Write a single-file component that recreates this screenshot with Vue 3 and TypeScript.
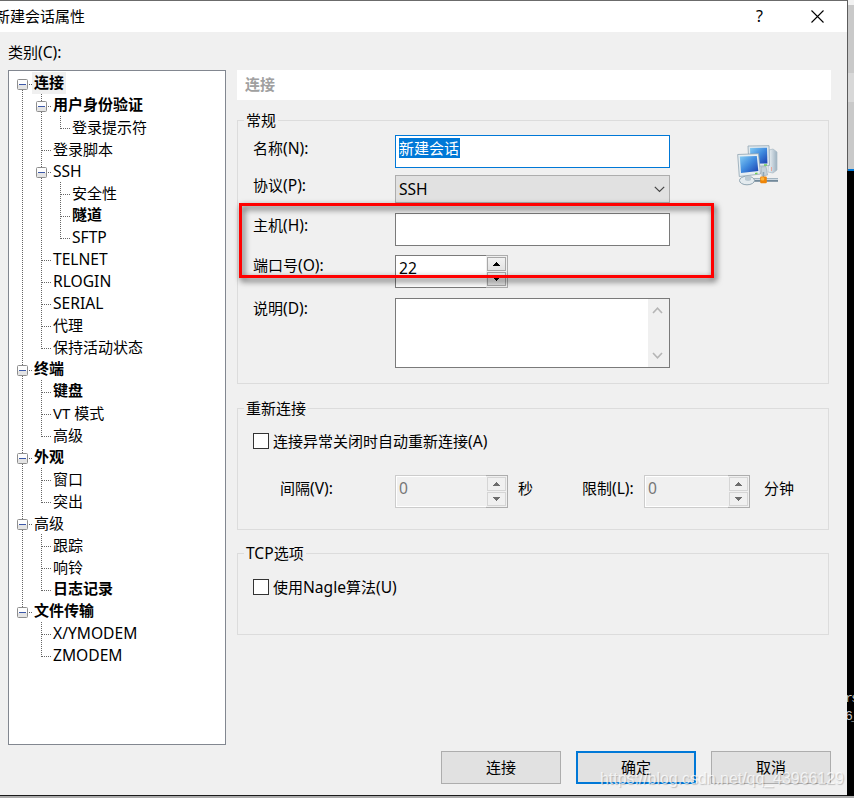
<script setup lang="ts">
import { ref } from 'vue'

interface TreeNode {
  label: string
  bold?: boolean
  active?: boolean
  children?: TreeNode[]
}

interface TreeRow {
  label: string
  bold: boolean
  active: boolean
  latin: boolean
  expandable: boolean
  guides: string[]
}

const tree: TreeNode[] = [
  {
    label: '连接',
    bold: true,
    active: true,
    children: [
      { label: '用户身份验证', bold: true, children: [{ label: '登录提示符' }] },
      { label: '登录脚本' },
      { label: 'SSH', children: [{ label: '安全性' }, { label: '隧道', bold: true }, { label: 'SFTP' }] },
      { label: 'TELNET' },
      { label: 'RLOGIN' },
      { label: 'SERIAL' },
      { label: '代理' },
      { label: '保持活动状态' },
    ],
  },
  { label: '终端', bold: true, children: [{ label: '键盘', bold: true }, { label: 'VT 模式' }, { label: '高级' }] },
  { label: '外观', bold: true, children: [{ label: '窗口' }, { label: '突出' }] },
  { label: '高级', children: [{ label: '跟踪' }, { label: '响铃' }, { label: '日志记录', bold: true }] },
  { label: '文件传输', bold: true, children: [{ label: 'X/YMODEM' }, { label: 'ZMODEM' }] },
]

// Path of the dotted guide inside one 19x22 cell
const THROUGH = 'M9.5 0V22'
const BRANCH = 'M9.5 0V22M10 12.5H19'
const CORNER = 'M9.5 0V13M10 12.5H19'
const START = 'M9.5 12V22M10 12.5H19'

function flatten(nodes: TreeNode[], parents: string[]): TreeRow[] {
  return nodes.flatMap((node, i) => {
    const last = i === nodes.length - 1
    const first = i === 0 && parents.length === 0
    const own = first ? START : last ? CORNER : BRANCH
    const row: TreeRow = {
      label: node.label,
      bold: !!node.bold,
      active: !!node.active,
      latin: /^[A-Z/]+$/.test(node.label),
      expandable: !!node.children,
      guides: [...parents, own],
    }
    return [row, ...flatten(node.children ?? [], [...parents, last ? '' : THROUGH])]
  })
}

const rows = flatten(tree, [])
const name = ref('新建会话')
const autoReconnect = ref(false)
const nagle = ref(false)
</script>

<template>
  <div class="desktop">
    <div class="dialog">
      <header class="titlebar">
        <span class="title">新建会话属性</span>
        <span class="help">?</span>
        <svg class="close" width="13" height="13" viewBox="0 0 13 13"><path d="M.5 .5L12.5 12.5M12.5 .5L.5 12.5" /></svg>
      </header>

      <div class="body">
        <aside class="side">
          <div class="side-label">类别<span class="latin">(C):</span></div>
          <div class="tree">
            <div v-for="(row, i) in rows" :key="i" class="node">
              <svg v-for="(guide, g) in row.guides" :key="g" class="guide" width="19" height="22" viewBox="0 0 19 22">
                <path class="dots" :d="guide" />
                <template v-if="row.expandable && g === row.guides.length - 1">
                  <rect class="box" x="4.5" y="7.5" width="10" height="10" rx="1" />
                  <rect class="box-shade" x="5" y="13" width="9" height="4" />
                  <path class="minus" d="M6 12.5H13" />
                </template>
              </svg>
              <span class="node-label" :class="{ bold: row.bold, active: row.active, latin: row.latin }">{{ row.label }}</span>
            </div>
          </div>
        </aside>

        <main class="main">
          <div class="banner">连接</div>

          <section class="group general">
            <div class="legend">常规</div>
            <div class="general-body">
              <div class="form">
                <div class="field f-name">
                  <label>名称<span class="latin">(N):</span></label>
                  <div class="input focused"><span class="selected">{{ name }}</span></div>
                </div>
                <div class="field f-proto">
                  <label>协议<span class="latin">(P):</span></label>
                  <div class="combo">
                    <span class="latin">SSH</span>
                    <svg width="11" height="7" viewBox="0 0 11 7"><path d="M.8 .8L5.5 5.5L10.2 .8" /></svg>
                  </div>
                </div>
                <div class="field f-host">
                  <label>主机<span class="latin">(H):</span></label>
                  <div class="input"></div>
                </div>
                <div class="field f-port">
                  <label>端口号<span class="latin">(O):</span></label>
                  <div class="spin">
                    <div class="spin-value latin">22</div>
                    <div class="updown">
                      <i><svg width="7" height="4" viewBox="0 0 7 4"><path d="M3 0h1v1h1v1h1v1h1v1H0V3h1V2h1V1h1z" /></svg></i>
                      <i><svg width="7" height="4" viewBox="0 0 7 4"><path d="M0 0h7v1H6v1H5v1H4v1H3V3H2V2H1V1H0z" /></svg></i>
                    </div>
                  </div>
                </div>
                <div class="field f-desc">
                  <label>说明<span class="latin">(D):</span></label>
                  <div class="textarea">
                    <div class="scroll">
                      <svg width="11" height="7" viewBox="0 0 11 7"><path d="M1 6L5.5 1.2L10 6" /></svg>
                      <svg width="11" height="7" viewBox="0 0 11 7"><path d="M1 1L5.5 5.8L10 1" /></svg>
                    </div>
                  </div>
                </div>
              </div>
              <svg class="net-icon" width="42" height="42" viewBox="0 0 42 42">
                <defs>
                  <linearGradient id="screen" x1="0" y1="0" x2="1" y2="1">
                    <stop offset="0" stop-color="#86cdf4" />
                    <stop offset=".5" stop-color="#3f8ade" />
                    <stop offset="1" stop-color="#1a3fae" />
                  </linearGradient>
                  <linearGradient id="tower" x1="0" y1="0" x2="1" y2="0">
                    <stop offset="0" stop-color="#f4f8fa" />
                    <stop offset="1" stop-color="#9db1c0" />
                  </linearGradient>
                </defs>
                <path d="M32 5L36 4L40 7V25L36 28L31 27Z" fill="url(#tower)" stroke="#a9bac6" stroke-width=".7" />
                <path d="M34.5 22V26" stroke="#e9a79b" />
                <path d="M11 1L32 .7L32.5 20.5L12 22Z" fill="#dfe8ee" stroke="#93a6b3" stroke-width=".8" />
                <path d="M13 3L30 2.7L30.4 18.4L13.5 18.7Z" fill="url(#screen)" />
                <path d="M24 22L29 21.5L30.5 30L25 31Z" fill="#c6d2da" stroke="#9cadb8" stroke-width=".7" />
                <path d="M17 35H41" stroke="#72899a" stroke-width="3.6" />
                <path d="M17 34.3H41" stroke="#d5e0e7" stroke-width="1.3" />
                <ellipse cx="10" cy="35.5" rx="7.5" ry="4.3" fill="#e4ebef" stroke="#91a5b2" />
                <path d="M8 30.5H14V35Q11 37 8 35Z" fill="#bccad3" />
                <path d="M.7 9.5L21.5 8.7L23.5 29L2.3 31.5Z" fill="#e6eef2" stroke="#91a5b2" stroke-width=".8" />
                <path d="M2.8 11.6L19.8 11L21.3 26L4 28Z" fill="url(#screen)" />
                <path d="M18 28.6L20.5 28.3M27 20H30" stroke="#72cf56" stroke-width="1.4" />
                <path d="M26.5 27V33" stroke="#91a5b2" stroke-width="1.5" />
                <rect x="23.2" y="31.6" width="6.6" height="6.6" rx="1" fill="#ee8508" />
                <rect x="24" y="32.3" width="3.2" height="3.2" rx="1" fill="#ffb53a" />
              </svg>
            </div>
          </section>

          <section class="group reconnect">
            <div class="legend">重新连接</div>
            <label class="check">
              <span class="checkbox" :class="{ on: autoReconnect }"></span>
              <span>连接异常关闭时自动重新连接<span class="latin">(A)</span></span>
            </label>
            <div class="timing">
              <span class="t-interval">间隔<span class="latin">(V):</span></span>
              <div class="spin disabled">
                <div class="spin-value latin">0</div>
                <div class="updown">
                  <i><svg width="7" height="4" viewBox="0 0 7 4"><path d="M3 0h1v1h1v1h1v1h1v1H0V3h1V2h1V1h1z" /></svg></i>
                  <i><svg width="7" height="4" viewBox="0 0 7 4"><path d="M0 0h7v1H6v1H5v1H4v1H3V3H2V2H1V1H0z" /></svg></i>
                </div>
              </div>
              <span class="t-sec">秒</span>
              <span class="t-limit">限制<span class="latin">(L):</span></span>
              <div class="spin disabled narrow">
                <div class="spin-value latin">0</div>
                <div class="updown">
                  <i><svg width="7" height="4" viewBox="0 0 7 4"><path d="M3 0h1v1h1v1h1v1h1v1H0V3h1V2h1V1h1z" /></svg></i>
                  <i><svg width="7" height="4" viewBox="0 0 7 4"><path d="M0 0h7v1H6v1H5v1H4v1H3V3H2V2H1V1H0z" /></svg></i>
                </div>
              </div>
              <span class="t-min">分钟</span>
            </div>
          </section>

          <section class="group tcp">
            <div class="legend"><span class="latin">TCP</span>选项</div>
            <label class="check">
              <span class="checkbox" :class="{ on: nagle }"></span>
              <span>使用<span class="latin">Nagle</span>算法<span class="latin">(U)</span></span>
            </label>
          </section>

          <footer class="actions">
            <div class="btn">连接</div>
            <div class="btn primary">确定</div>
            <div class="btn">取消</div>
          </footer>
        </main>
      </div>
    </div>

    <div class="backdrop">
      <div class="strip-a"></div>
      <div class="strip-b"></div>
      <div class="strip-c"></div>
      <div class="console"><span>rs</span><span>6_</span></div>
    </div>

    <div class="marker"></div>
    <div class="watermark">https://blog.csdn.net/qq_43966129</div>
  </div>
</template>

<style>
body {
  margin: 0;
  overflow: hidden;
}
</style>

<style scoped>
* {
  box-sizing: border-box;
}
.desktop {
  position: relative;
  display: flex;
  width: 854px;
  height: 798px;
  overflow: hidden;
  background: #ababab;
  color: #000;
  font: 15px/22px "Noto Sans", "Noto Sans CJK SC", sans-serif;
  white-space: nowrap;
}
svg {
  display: block;
  flex: none;
}
.latin {
  font-size: 15.6px;
}
.dialog {
  width: 848px;
  height: 796px;
  flex: none;
  background: #f0f0f0;
  border-top: 1px solid #6b6b6b;
  border-right: 1px solid #5c5c5c;
  border-bottom: 1px solid #1a1a1a;
}
.titlebar {
  display: flex;
  height: 31px;
  background: #fff;
  line-height: 30px;
}
.title {
  width: 757px;
  margin-left: -5px;
}
.help {
  width: 59px;
  padding-left: 4px;
  font-size: 16px;
}
.close {
  margin-top: 9px;
  stroke: #000;
  stroke-width: 1.1;
  fill: none;
}
.body {
  display: flex;
  padding-left: 8px;
}
.side {
  width: 218px;
  margin-right: 11px;
}
.side-label {
  height: 38px;
  padding-top: 9px;
}
.tree {
  height: 675px;
  padding: 1px 0 0 4px;
  background: #fff;
  border: 1px solid #828790;
}
.node {
  display: flex;
  height: 22px;
}
.dots {
  fill: none;
  stroke: #666;
  stroke-width: 1;
  stroke-dasharray: 1 1;
  shape-rendering: crispEdges;
}
.box {
  fill: #fdfdfd;
  stroke: #8e8e8e;
}
.box-shade {
  fill: #e4e4e4;
}
.minus {
  stroke: #3c58a8;
}
.node-label {
  height: 22px;
  padding: 0 2px;
}
.bold {
  font-weight: 700;
  line-height: 20px;
}
.active {
  background: #f0f0f0;
}
.main {
  width: 594px;
  padding-top: 38px;
}
.banner {
  height: 30px;
  padding-left: 8px;
  background: #fff;
  color: #a0a0a0;
  font-weight: 700;
  line-height: 28px;
}
.group {
  width: 592px;
  border: 1px solid #dcdcdc;
}
.legend {
  width: max-content;
  height: 22px;
  margin: -12px 0 0 6px;
  padding: 0 2px;
  background: #f0f0f0;
}
.general {
  height: 264px;
  margin-top: 20px;
}
.general-body {
  display: flex;
  padding: 4px 0 0 15px;
}
.form {
  width: 484px;
}
.net-icon {
  margin-top: 10px;
}
.field {
  display: flex;
}
.field label {
  width: 142px;
}
.f-name {
  height: 33px;
  line-height: 26px;
}
.f-proto {
  height: 28px;
  margin-top: 7px;
  line-height: 20px;
}
.f-host {
  height: 33px;
  margin-top: 10px;
  line-height: 24px;
}
.f-port {
  height: 33px;
  margin-top: 9px;
  line-height: 20px;
}
.f-desc {
  height: 70px;
  margin-top: 10px;
  line-height: 20px;
}
.input {
  width: 275px;
  padding: 2px 3px;
  background: #fff;
  border: 1px solid #7a7a7a;
}
.focused {
  border-color: #0078d7;
}
.selected {
  display: block;
  width: 61px;
  height: 20px;
  background: #0078d7;
  color: #fff;
  line-height: 20px;
}
.combo {
  display: flex;
  align-items: center;
  justify-content: space-between;
  width: 275px;
  padding: 0 4px 0 3px;
  background: #e1e1e1;
  border: 1px solid #adadad;
}
.combo svg {
  fill: none;
  stroke: #444;
  stroke-width: 1.2;
}
.spin {
  display: flex;
  width: 113px;
  height: 33px;
}
.spin-value {
  flex: 1;
  padding-left: 3px;
  background: #fff;
  border: 1px solid #7a7a7a;
  border-right: 0;
  line-height: 24px;
}
.updown {
  display: flex;
  flex-direction: column;
  gap: 1px;
  width: 22px;
  padding: 1px;
  background: #f0f0f0;
  border: 1px solid #adadad;
  border-left: 0;
}
.updown i {
  display: flex;
  align-items: center;
  justify-content: center;
  width: 19px;
  height: 14px;
  background: linear-gradient(#f2f2f2, #e2e2e2);
  border: 1px solid #a8a8a8;
}
.updown path {
  fill: #000;
  shape-rendering: crispEdges;
}
.disabled .spin-value {
  background: #f0f0f0;
  border-color: #ccc;
  box-shadow: inset 1px 1px #fff, inset 0 -1px #fff;
  color: #777;
}
.disabled .updown i {
  background: #f0f0f0;
  border-color: #d5d5d5;
}
.disabled .updown path {
  fill: #6d6d6d;
}
.narrow {
  width: 106px;
}
.textarea {
  display: flex;
  justify-content: flex-end;
  width: 275px;
  background: #fff;
  border: 1px solid #7a7a7a;
}
.scroll {
  display: flex;
  flex-direction: column;
  justify-content: space-between;
  align-items: center;
  width: 21px;
  padding: 8px 2px 8px 0;
  background: #f0f0f0;
}
.scroll path {
  fill: none;
  stroke: #b5b5b5;
  stroke-width: 1.6;
}
.reconnect {
  height: 122px;
  margin-top: 24px;
}
.check {
  display: flex;
  align-items: center;
  gap: 4px;
  height: 22px;
  margin: 11px 0 0 15px;
}
.checkbox {
  width: 16px;
  height: 16px;
  background: #fff;
  border: 1px solid #333;
}
.checkbox.on {
  background: #0078d7;
}
.timing {
  display: flex;
  margin: 23px 0 0 42px;
  line-height: 26px;
}
.t-interval {
  width: 115px;
}
.t-sec {
  width: 74px;
  padding-left: 10px;
}
.t-limit {
  width: 62px;
}
.t-min {
  padding-left: 14px;
}
.tcp {
  height: 82px;
  margin-top: 23px;
}
.tcp .check {
  margin-top: 12px;
}
.actions {
  display: flex;
  justify-content: flex-end;
  gap: 15px;
  margin-top: 116px;
}
.btn {
  width: 120px;
  height: 33px;
  background: #e1e1e1;
  border: 1px solid #adadad;
  line-height: 30px;
  text-align: center;
}
.primary {
  border: 2px solid #0078d7;
  line-height: 28px;
}
.backdrop {
  display: flex;
  flex-direction: column;
  width: 6px;
  height: 796px;
  padding-top: 5px;
  background: #f2f2f2;
}
.strip-a {
  height: 68px;
  background: #c9c9c9;
}
.strip-b {
  height: 29px;
  background: #d8d8d8;
}
.strip-c {
  height: 69px;
  background: #c9c9c9;
  border-bottom: 2px solid #0078d7;
}
.console {
  display: flex;
  flex: 1;
  flex-direction: column;
  margin-left: -1px;
  padding-top: 519px;
  overflow: hidden;
  background: #000;
  color: #c8c8c8;
  font: 13px/18px "Liberation Mono", monospace;
  letter-spacing: -1.5px;
}
.console span {
  margin-left: -2px;
}
.marker {
  position: absolute;
  top: 203px;
  left: 239px;
  width: 475px;
  height: 75px;
  border: 3px solid #f00;
  filter: drop-shadow(2px 3px 3px rgba(0, 0, 0, 0.75));
}
.watermark {
  position: absolute;
  top: 769px;
  left: 600px;
  color: rgba(255, 255, 255, 0.72);
  font: 16px/20px "Liberation Sans", sans-serif;
  letter-spacing: -0.05px;
  text-shadow: 1px 1px 1px rgba(0, 0, 0, 0.2);
}
</style>
